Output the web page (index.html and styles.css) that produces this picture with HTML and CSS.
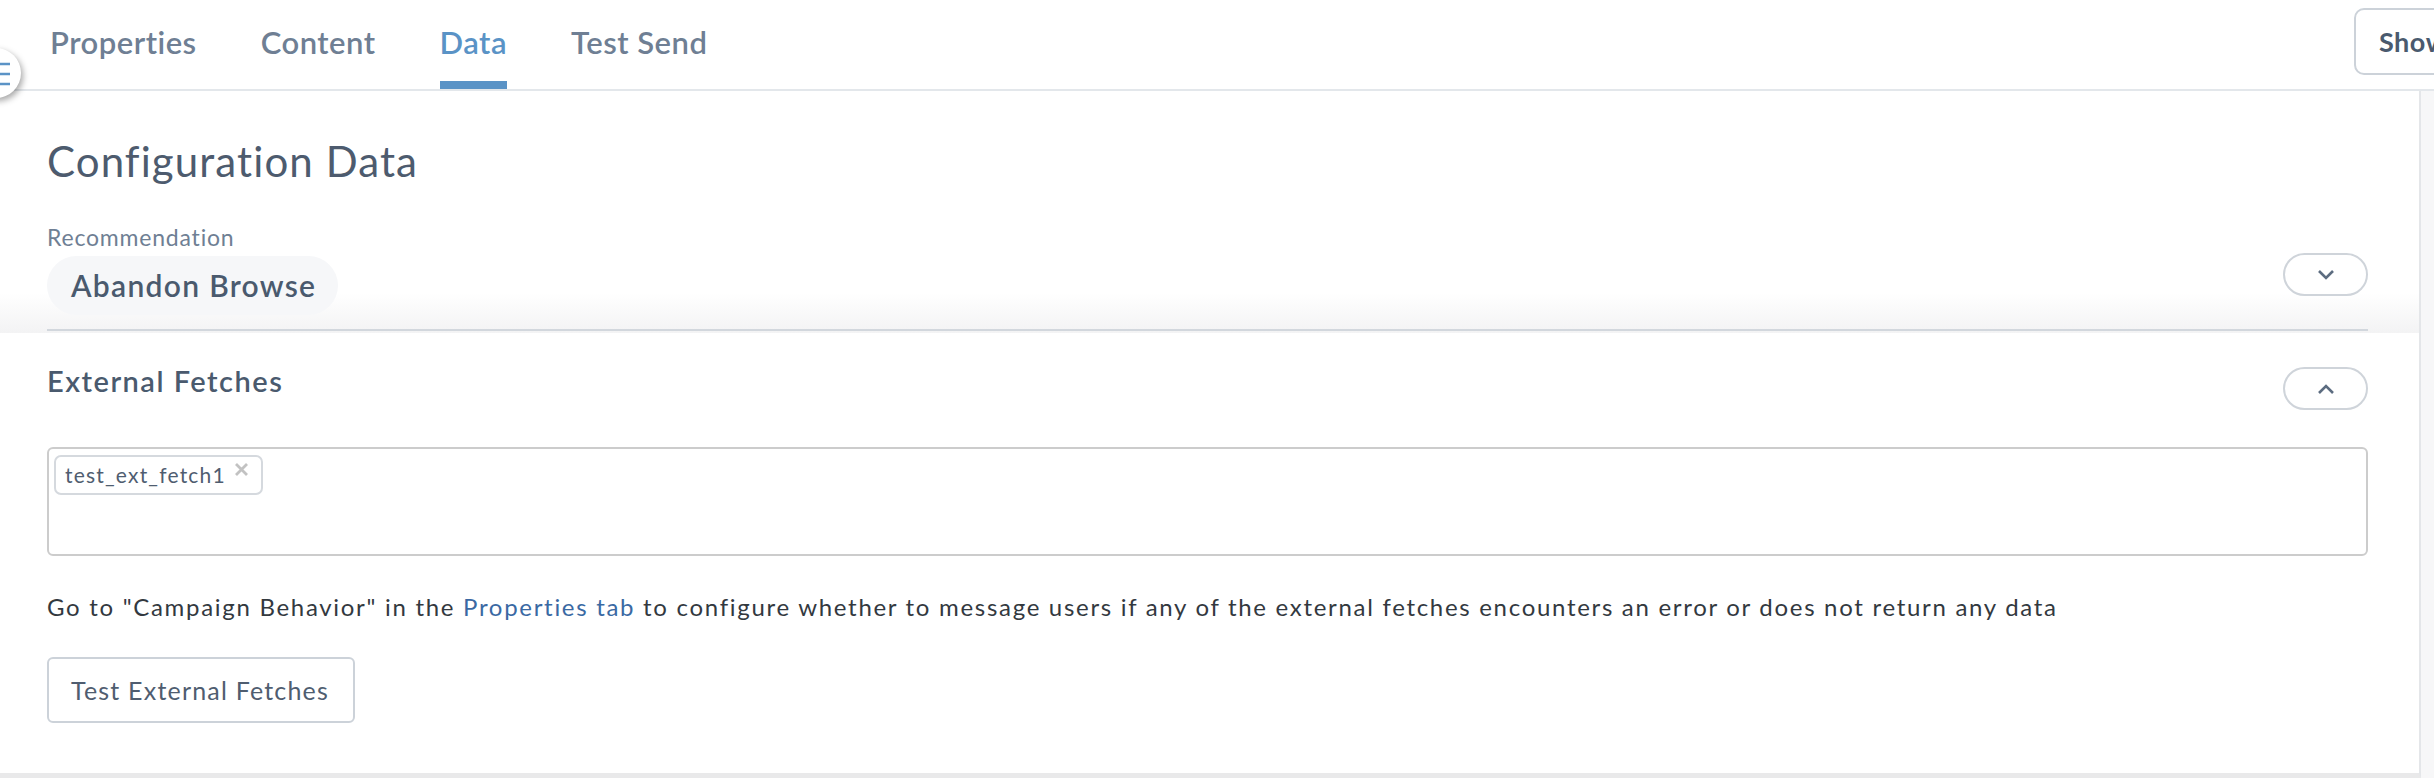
FILE: index.html
```html
<!DOCTYPE html>
<html lang="en">
<head>
<meta charset="utf-8">
<title>Data</title>
<link rel="stylesheet" href="styles.css">
</head>
<body>
<div class="page">
  <header class="topbar">
    <nav class="tabs">
      <a class="tab">Properties</a>
      <a class="tab">Content</a>
      <a class="tab active">Data</a>
      <a class="tab">Test Send</a>
    </nav>
    <button class="show-btn">Show</button>
  </header>
  <button class="menu-toggle" aria-label="menu">
    <svg width="30" height="30" viewBox="0 0 30 30"><path d="M0 6H22M0 16H22M0 26H22" stroke="#5b93c6" stroke-width="2.6" fill="none"/></svg>
  </button>
  <div class="main">
    <div class="panel">
      <section class="config">
        <div class="config-inner">
          <h1 class="title">Configuration Data</h1>
          <div class="rec-row">
            <div class="rec-col">
              <div class="label">Recommendation</div>
              <div class="pill">Abandon Browse</div>
            </div>
            <button class="chev-btn chev-down" aria-label="expand">
              <svg width="20" height="12" viewBox="0 0 20 12"><path d="M3 2L10 9L17 2" stroke="#5c6c80" stroke-width="2.6" fill="none"/></svg>
            </button>
          </div>
        </div>
      </section>
      <section class="fetches">
        <div class="fetch-head">
          <h2 class="subtitle">External Fetches</h2>
          <button class="chev-btn chev-up" aria-label="collapse">
            <svg width="20" height="12" viewBox="0 0 20 12"><path d="M3 10L10 3L17 10" stroke="#5c6c80" stroke-width="2.6" fill="none"/></svg>
          </button>
        </div>
        <div class="tag-box">
          <span class="chip">test_ext_fetch1<svg class="chip-x" width="15" height="15" viewBox="0 0 15 15"><path d="M2 2L13 13M13 2L2 13" stroke="#c2c2c2" stroke-width="2.8" fill="none"/></svg></span>
        </div>
        <p class="help">Go to "Campaign Behavior" in the <a class="link">Properties tab</a> to configure whether to message users if any of the external fetches encounters an error or does not return any data</p>
        <button class="test-btn">Test External Fetches</button>
      </section>
    </div>
    <div class="side"></div>
  </div>
</div>
</body>
</html>
```
FILE: styles.css
```css
* { box-sizing: border-box; }
html, body { margin: 0; padding: 0; }
body {
  width: 2434px;
  height: 778px;
  overflow: hidden;
  background: #ebebec;
  font-family: "Lato", "Open Sans", sans-serif;
  color: #4d5b6e;
}
.page { position: relative; width: 2434px; }
.topbar {
  display: flex;
  align-items: flex-start;
  height: 91px;
  background: #fff;
  border-bottom: 2px solid #e3e7eb;
  overflow: hidden;
  padding-left: 50px;
}
.tabs { display: flex; gap: 64px; }
.tab {
  display: block;
  height: 89px;
  padding-top: 23px;
  line-height: 38px;
  font-size: 31px;
  font-weight: 600;
  letter-spacing: 0.5px;
  color: #6f7f94;
  border-bottom: 8px solid transparent;
}
.tab.active { color: #5a93c6; border-bottom-color: #5a93c6; }
.show-btn {
  margin-left: auto;
  margin-right: -70px;
  margin-top: 8px;
  width: 150px;
  height: 67px;
  border: 2px solid #ccd2d9;
  border-radius: 10px;
  background: #fff;
  padding: 0 0 0 23px;
  text-align: left;
  font-family: inherit;
  font-size: 27px;
  font-weight: 700;
  letter-spacing: 0.5px;
  color: #4a5a6e;
}
.menu-toggle {
  position: absolute;
  left: -29px;
  top: 48px;
  width: 50px;
  height: 50px;
  border-radius: 50%;
  border: none;
  background: #fff;
  box-shadow: 2px 3px 6px rgba(0,0,0,0.35);
  padding: 0;
}
.menu-toggle svg { position: absolute; left: 17px; top: 10px; }
.main { display: flex; background: #f7f7f8; }
.panel {
  width: 2421px;
  background: #fff;
  border-right: 2px solid #e4e6e9;
  border-bottom: 5px solid #e9e9ea;
}
.side { flex: 1; }
.config {
  padding: 45px 51px 2px 47px;
  background: linear-gradient(to bottom, #fff 0, #fff calc(100% - 40px), #f3f3f4 100%);
}
.config-inner { border-bottom: 2px solid #d2d7dd; padding-bottom: 14px; }
.title {
  margin: 0;
  font-size: 42px;
  line-height: 50px;
  font-weight: 400;
  letter-spacing: 1.1px;
  color: #4d5b6e;
}
.rec-row { display: flex; justify-content: space-between; align-items: flex-end; }
.label {
  margin-top: 37px;
  font-size: 23px;
  line-height: 28px;
  letter-spacing: 0.8px;
  color: #6f7f94;
}
.pill {
  display: inline-block;
  margin-top: 5px;
  height: 59px;
  line-height: 59px;
  padding: 0 22px 0 24px;
  border-radius: 30px;
  background: #f6f7f9;
  font-size: 30px;
  font-weight: 600;
  letter-spacing: 1.3px;
  color: #4a5a6e;
}
.chev-btn {
  width: 85px;
  height: 43px;
  border: 2px solid #cfd4da;
  border-radius: 22px;
  background: #fff;
  padding: 0;
  display: flex;
  align-items: center;
  justify-content: center;
}
.chev-down { margin-bottom: 19px; }
.fetches { padding: 30px 51px 50px 47px; }
.fetch-head { display: flex; justify-content: space-between; align-items: flex-start; }
.subtitle {
  margin: 0;
  font-size: 29px;
  line-height: 35px;
  font-weight: 600;
  letter-spacing: 1.5px;
  color: #4a5a6e;
}
.chev-up { margin-top: 4px; }
.tag-box {
  margin-top: 37px;
  height: 109px;
  border: 2px solid #cccccc;
  border-radius: 6px;
  padding: 6px 5px;
}
.chip {
  display: inline-flex;
  align-items: flex-start;
  height: 40px;
  border: 2px solid #d5d9de;
  border-radius: 7px;
  padding: 0 12px 0 9px;
  font-size: 21px;
  line-height: 36px;
  letter-spacing: 1.2px;
  color: #4f5d70;
}
.chip-x { margin-left: 8px; margin-top: 5px; }
.help {
  margin: 37px 0 0 0;
  font-size: 24px;
  line-height: 28px;
  letter-spacing: 1.7px;
  color: #33393f;
}
.link { color: #3a69a3; }
.test-btn {
  display: block;
  margin-top: 36px;
  height: 66px;
  padding: 0 24px 0 22px;
  border: 2px solid #ccd2d9;
  border-radius: 6px;
  background: #fff;
  font-family: inherit;
  font-size: 25px;
  letter-spacing: 1.2px;
  color: #4f5d70;
}
```
